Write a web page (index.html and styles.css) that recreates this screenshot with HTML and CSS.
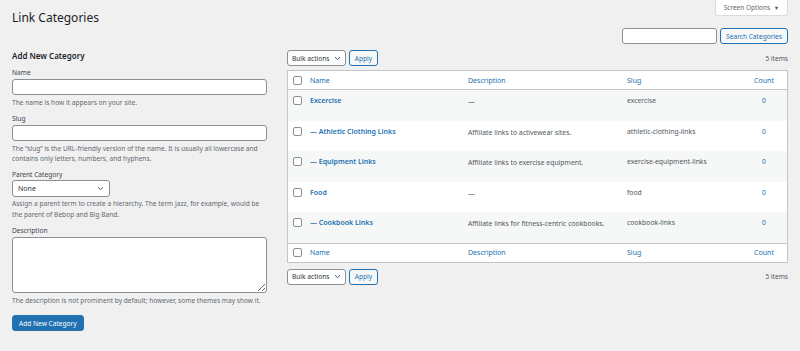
FILE: index.html
```html
<!DOCTYPE html>
<html>
<head>
    <meta charset="UTF-8">
    <title>Link Categories</title>
    <link rel="stylesheet" href="styles.css">
</head>
<body>
    <div class="wrap">
        <div class="top-bar">
            <h1>Link Categories</h1>
            <button class="screen-options">Screen Options <span class="arrow">&#9660;</span></button>
        </div>

        <div class="search-box">
            <input type="search" class="search-input">
            <button class="button">Search Categories</button>
        </div>

        <div class="col-wrap">
            <!-- left: add new category form -->
            <div class="col-left">
                <h2>Add New Category</h2>
                <div class="form-field">
                    <label>Name</label>
                    <input type="text" class="text-input">
                    <p>The name is how it appears on your site.</p>
                </div>
                <div class="form-field">
                    <label>Slug</label>
                    <input type="text" class="text-input">
                    <p>The &ldquo;slug&rdquo; is the URL-friendly version of the name. It is usually all lowercase and contains only letters, numbers, and hyphens.</p>
                </div>
                <div class="form-field">
                    <label>Parent Category</label>
                    <div class="select parent-select">
                        <span>None</span>
                        <svg width="7" height="5" viewBox="0 0 7 5"><path d="M1 1.2 L3.5 3.6 L6 1.2" fill="none" stroke="#50575e" stroke-width="1"/></svg>
                    </div>
                    <p class="tall">Assign a parent term to create a hierarchy. The term Jazz, for example, would be the parent of Bebop and Big Band.</p>
                </div>
                <div class="form-field">
                    <label>Description</label>
                    <textarea class="textarea"></textarea>
                    <p>The description is not prominent by default; however, some themes may show it.</p>
                </div>
                <button class="button-primary">Add New Category</button>
            </div>

            <!-- right: categories table -->
            <div class="col-right">
                <div class="tablenav">
                    <div class="actions">
                        <div class="select bulk-select">
                            <span>Bulk actions</span>
                            <svg width="7" height="5" viewBox="0 0 7 5"><path d="M1 1.2 L3.5 3.6 L6 1.2" fill="none" stroke="#50575e" stroke-width="1"/></svg>
                        </div>
                        <button class="button apply">Apply</button>
                    </div>
                    <span class="num-items">5 items</span>
                </div>

                <table class="list-table">
                    <colgroup>
                        <col style="width:18px">
                        <col style="width:158px">
                        <col style="width:159px">
                        <col style="width:118px">
                        <col style="width:46px">
                    </colgroup>
                    <thead>
                        <tr>
                            <th class="cb"><span class="checkbox"></span></th>
                            <th><a href="#">Name</a></th>
                            <th><a href="#">Description</a></th>
                            <th><a href="#">Slug</a></th>
                            <th class="count"><a href="#">Count</a></th>
                        </tr>
                    </thead>
                    <tbody>
                        <tr class="alt">
                            <td class="cb"><span class="checkbox"></span></td>
                            <td class="name"><a href="#">Excercise</a></td>
                            <td class="desc">&mdash;</td>
                            <td>excercise</td>
                            <td class="count"><a href="#">0</a></td>
                        </tr>
                        <tr>
                            <td class="cb"><span class="checkbox"></span></td>
                            <td class="name"><a href="#">&mdash; Athletic Clothing Links</a></td>
                            <td class="desc">Affiliate links to activewear sites.</td>
                            <td>athletic-clothing-links</td>
                            <td class="count"><a href="#">0</a></td>
                        </tr>
                        <tr class="alt">
                            <td class="cb"><span class="checkbox"></span></td>
                            <td class="name"><a href="#">&mdash; Equipment Links</a></td>
                            <td class="desc">Affiliate links to exercise equipment.</td>
                            <td>exercise-equipment-links</td>
                            <td class="count"><a href="#">0</a></td>
                        </tr>
                        <tr>
                            <td class="cb"><span class="checkbox"></span></td>
                            <td class="name"><a href="#">Food</a></td>
                            <td class="desc">&mdash;</td>
                            <td>food</td>
                            <td class="count"><a href="#">0</a></td>
                        </tr>
                        <tr class="alt">
                            <td class="cb"><span class="checkbox"></span></td>
                            <td class="name"><a href="#">&mdash; Cookbook Links</a></td>
                            <td class="desc">Affiliate links for fitness-centric cookbooks.</td>
                            <td>cookbook-links</td>
                            <td class="count"><a href="#">0</a></td>
                        </tr>
                    </tbody>
                    <tfoot>
                        <tr>
                            <th class="cb"><span class="checkbox"></span></th>
                            <th><a href="#">Name</a></th>
                            <th><a href="#">Description</a></th>
                            <th><a href="#">Slug</a></th>
                            <th class="count"><a href="#">Count</a></th>
                        </tr>
                    </tfoot>
                </table>

                <div class="tablenav bottom">
                    <div class="actions">
                        <div class="select bulk-select">
                            <span>Bulk actions</span>
                            <svg width="7" height="5" viewBox="0 0 7 5"><path d="M1 1.2 L3.5 3.6 L6 1.2" fill="none" stroke="#50575e" stroke-width="1"/></svg>
                        </div>
                        <button class="button apply">Apply</button>
                    </div>
                    <span class="num-items">5 items</span>
                </div>
            </div>
        </div>
    </div>
</body>
</html>
```

FILE: styles.css
```css
body {
    margin: 0;
    background-color: #f0f0f1;
    font-family: "Noto Sans", sans-serif;
    font-size: 6.6px;
    color: #3c434a;
}

a {
    color: #2271b1;
    text-decoration: none;
}

.wrap {
    padding: 0 12px;
}

.top-bar {
    display: flex;
    justify-content: space-between;
    align-items: flex-start;
    height: 28px;
}

h1 {
    margin: 0;
    padding-top: 10px;
    font-size: 12px;
    line-height: 16px;
    font-weight: 400;
    color: #1d2327;
}

.screen-options {
    width: 73px;
    height: 16px;
    padding: 0;
    border: 1px solid #dcdcde;
    border-top: none;
    border-radius: 0 0 3px 3px;
    background-color: #fff;
    font-family: inherit;
    font-size: 6.5px;
    color: #646970;
}

.screen-options .arrow {
    font-size: 5.5px;
    margin-left: 2px;
    color: #50575e;
}

.search-box {
    display: flex;
    justify-content: flex-end;
    gap: 3px;
    height: 16px;
}

.search-input {
    width: 95px;
    height: 16px;
    box-sizing: border-box;
    border: 1px solid #8c8f94;
    border-radius: 3px;
    background-color: #fff;
}

.button {
    height: 16px;
    box-sizing: border-box;
    padding: 0 5px;
    border: 1px solid #2271b1;
    border-radius: 3px;
    background-color: #f6f7f7;
    color: #2271b1;
    font-family: inherit;
    font-size: 6.6px;
}

.col-wrap {
    display: grid;
    grid-template-columns: 255px 1fr;
    gap: 20px;
    margin-top: 6px;
}

/* left form */
.col-left h2 {
    margin: 0;
    font-size: 8px;
    line-height: 12px;
    font-weight: 600;
    color: #1d2327;
}

.form-field {
    margin-top: 6px;
}

.form-field label {
    display: block;
    line-height: 10px;
    color: #3c434a;
}

.form-field p {
    margin: 3px 0 0;
    line-height: 10px;
    color: #646970;
}

.form-field p.tall {
    margin-top: 2px;
    line-height: 10.5px;
}

.text-input {
    display: block;
    width: 100%;
    height: 16px;
    margin-top: 1px;
    box-sizing: border-box;
    border: 1px solid #8c8f94;
    border-radius: 3px;
    background-color: #fff;
}

.textarea {
    display: block;
    width: 100%;
    height: 56px;
    margin: 1px 0 0;
    box-sizing: border-box;
    border: 1px solid #8c8f94;
    border-radius: 3px;
    background-color: #fff;
    resize: vertical;
}

.select {
    display: flex;
    align-items: center;
    justify-content: space-between;
    height: 16px;
    box-sizing: border-box;
    padding: 0 5px;
    border: 1px solid #8c8f94;
    border-radius: 3px;
    background-color: #fff;
    color: #2c3338;
}

.parent-select {
    width: 98px;
    height: 17px;
    padding-left: 5px;
    font-size: 7px;
}

.button-primary {
    margin-top: 9px;
    height: 16px;
    padding: 0 6px;
    border: 1px solid #2271b1;
    border-radius: 3px;
    background-color: #2271b1;
    color: #fff;
    font-family: inherit;
    font-size: 6.6px;
}

/* right table */
.tablenav {
    display: flex;
    justify-content: space-between;
    align-items: center;
    height: 16px;
    margin-bottom: 4px;
}

.tablenav.bottom {
    margin: 6px 0 0;
}

.actions {
    display: flex;
    gap: 3px;
}

.bulk-select {
    width: 59px;
    padding: 0 4px 0 4px;
}

.apply {
    width: 29px;
    padding: 0;
}

.num-items {
    color: #50575e;
}

.list-table {
    width: 100%;
    table-layout: fixed;
    border-collapse: separate;
    border-spacing: 0;
    border: 1px solid #c3c4c7;
    background-color: #fff;
    font-size: 6.8px;
}

.list-table th {
    height: 18px;
    padding: 0 4px;
    text-align: left;
    font-weight: 400;
    font-size: 7px;
}

.list-table thead th {
    border-bottom: 1px solid #c3c4c7;
}

.list-table tfoot th {
    border-top: 1px solid #c3c4c7;
}

.list-table tbody tr {
    height: 30.6px;
}

.list-table td {
    padding: 6px 4px 0;
    vertical-align: top;
    line-height: 10px;
    color: #50575e;
}

.list-table tr.alt td {
    background-color: #f6f7f7;
}

.list-table .cb {
    padding: 0 0 0 5px;
}

.list-table td.cb {
    padding-top: 6px;
}

.checkbox {
    display: block;
    width: 9px;
    height: 9px;
    box-sizing: border-box;
    border: 1px solid #8c8f94;
    border-radius: 2px;
    background-color: #fff;
}

.list-table td.name {
    font-size: 7px;
    font-weight: 600;
}

.list-table td.desc {
    padding-top: 7px;
}

.list-table .count {
    text-align: center;
}
```
